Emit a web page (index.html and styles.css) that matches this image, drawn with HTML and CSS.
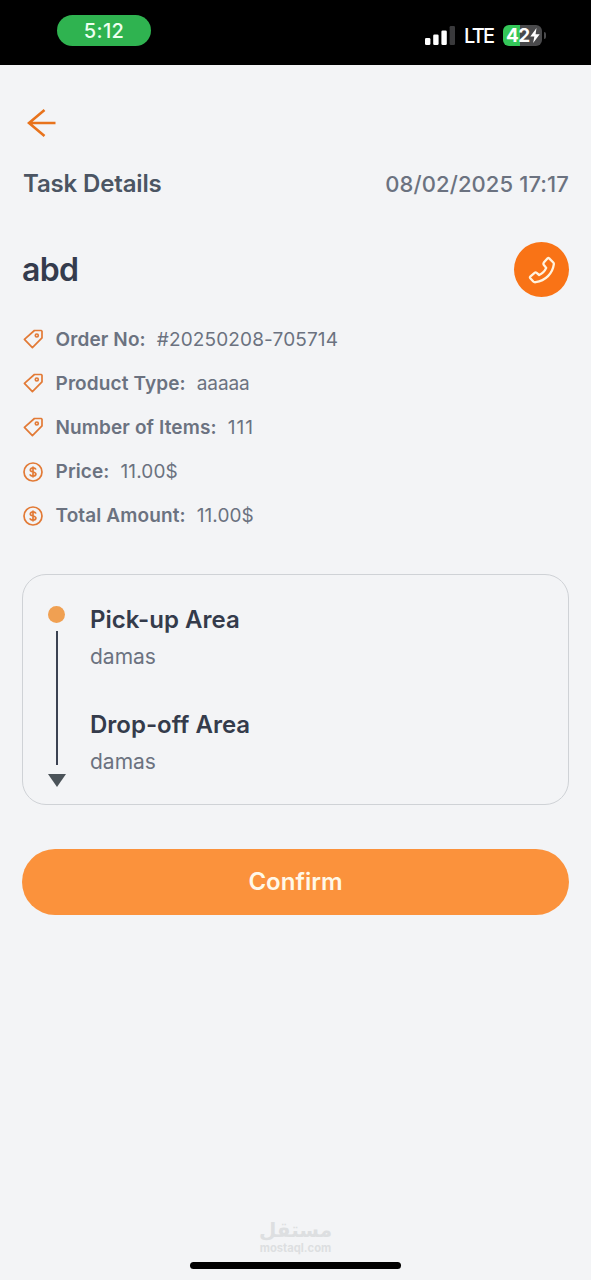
FILE: index.html
```html
<!DOCTYPE html>
<html lang="en">
<head>
<meta charset="utf-8">
<title>Task Details</title>
<link rel="stylesheet" href="styles.css">
</head>
<body>
<svg class="defs" aria-hidden="true">
  <symbol id="tag" viewBox="0 0 20 20"><path d="M1.4 10.3 11.4 1.5H18.3L19 2.3V8.9L9.4 18.6Z"/><circle cx="13.8" cy="6.5" r="1.5"/></symbol>
  <symbol id="coin" viewBox="0 0 20 20"><circle cx="10" cy="10" r="9"/><path d="M12.8 7.7C12.6 6.5 11.5 5.9 10 5.9S7.3 6.6 7.3 7.9C7.3 10.6 12.9 9.3 12.9 12.1 12.9 13.4 11.7 14.1 10 14.1S7.2 13.4 7.1 12.2M10 4.5V15.5"/></symbol>
</svg>
<header class="status">
  <div class="clock">5:12</div>
  <div class="indicators">
    <svg class="signal" viewBox="0 0 30 19"><rect x="0" y="12" width="5.4" height="7" rx="1.3"/><rect x="8.2" y="8.5" width="5.4" height="10.5" rx="1.3"/><rect x="16.4" y="4.5" width="5.4" height="14.5" rx="1.3"/><rect class="dim" x="24.6" y="0" width="5.4" height="19" rx="1.3"/></svg>
    <span class="network">LTE</span>
    <div class="battery"><span>42</span><svg class="bolt" viewBox="0 0 10 16"><path d="M6.6 0 0 9H4.3L3 16 10 6.7H5.6Z"/></svg></div>
    <i class="battery-cap"></i>
  </div>
</header>
<main class="page">
  <svg class="back" viewBox="0 0 30 30"><path d="M28.5 15H2M17.5 2 2 15 17.5 28"/></svg>
  <div class="heading"><h1>Task Details</h1><time>08/02/2025 17:17</time></div>
  <div class="customer">
    <h2>abd</h2>
    <a class="call"><svg viewBox="0 0 28 28"><path d="M19.6 2.3Q20.4 1.7 21.2 2.4L25.3 6.5Q26 7.2 25.8 8.4C24.6 17.5 17.6 24.6 7.6 26.2Q6.2 26.4 5.3 25.5L2.3 22.2Q1.5 21.2 2.5 20.3L6.6 16.8Q7.6 16 8.6 16.8L11.2 19C14.4 17.5 16.9 15 18.2 11.9L15.9 9Q15 7.8 15.8 6.6Z"/></svg></a>
  </div>
  <ul class="facts">
    <li><svg><use href="#tag"/></svg><b>Order No:</b><span class="number">#20250208-705714</span></li>
    <li><svg><use href="#tag"/></svg><b>Product Type:</b><span class="word">aaaaa</span></li>
    <li><svg><use href="#tag"/></svg><b>Number of Items:</b><span class="count">111</span></li>
    <li><svg><use href="#coin"/></svg><b>Price:</b><span>11.00$</span></li>
    <li><svg><use href="#coin"/></svg><b>Total Amount:</b><span>11.00$</span></li>
  </ul>
  <section class="route">
    <div class="track"><i class="dot"></i><i class="line"></i><svg class="arrow" viewBox="0 0 18 13"><path d="M0 0H18L9 13Z"/></svg></div>
    <div class="stops">
      <div class="stop"><h3>Pick-up Area</h3><p>damas</p></div>
      <div class="stop"><h3>Drop-off Area</h3><p>damas</p></div>
    </div>
  </section>
  <button class="confirm">Confirm</button>
</main>
<footer class="footer">
  <div class="brand" lang="ar">مستقل</div>
  <div class="domain">mostaql.com</div>
  <div class="home-bar"></div>
</footer>
</body>
</html>
```
FILE: styles.css
```css
* { box-sizing: border-box; }
body { margin: 0; height: 1280px; display: flex; flex-direction: column; background: #f3f4f6; color: #6b7280; font-family: Inter, "Liberation Sans", sans-serif; overflow: hidden; }
h1, h2, h3, p, ul { margin: 0; padding: 0; }
.defs { display: none; }
.status { height: 65px; flex: none; background: #000; color: #fff; display: flex; justify-content: space-between; align-items: flex-start; padding: 15px 45px 0 57px; }
.clock { width: 94px; height: 31px; border-radius: 16px; background: #2fb350; color: #eefff0; text-align: center; font-size: 20px; line-height: 32px; font-weight: 500; letter-spacing: 0.3px; }
.indicators { display: flex; align-items: center; margin-top: 8px; height: 24px; }
.signal { width: 30px; height: 19px; fill: #fff; }
.signal .dim { fill: #3a3a3c; }
.network { margin: 2px 0 0 9px; width: 30px; font-size: 20px; font-weight: 500; letter-spacing: -1.7px; }
.battery { margin-left: 9px; width: 39px; height: 21px; border-radius: 6px; background: linear-gradient(90deg, #34c759 43%, #4a4a4c 43%); display: flex; align-items: center; padding-left: 3px; font-size: 19px; font-weight: 700; letter-spacing: -0.5px; }
.bolt { width: 10px; height: 15px; fill: #fff; }
.battery-cap { width: 2px; height: 7px; margin-left: 2px; border-radius: 0 2px 2px 0; background: #4a4a4c; }
.page { flex: 1; padding: 43px 22px 0; }
.back { display: block; width: 30px; height: 30px; margin-left: 5px; fill: none; stroke: #e8731c; stroke-width: 2.6; }
.heading { display: flex; justify-content: space-between; align-items: center; height: 30px; margin-top: 30px; padding-left: 1px; }
h1 { font-size: 24px; font-weight: 600; color: #4b5563; letter-spacing: -0.15px; }
time { font-size: 22px; font-weight: 500; margin-top: 1px; letter-spacing: 0.1px; }
.customer { display: flex; justify-content: space-between; align-items: center; height: 55px; margin-top: 44px; }
h2 { font-size: 32px; font-weight: 600; color: #343b4d; letter-spacing: -0.7px; }
.call { width: 55px; height: 55px; border-radius: 50%; background: #f97316; display: flex; align-items: center; justify-content: center; }
.call svg { width: 28px; height: 28px; fill: none; stroke: #fff3df; stroke-width: 2.3; stroke-linejoin: round; }
.facts { list-style: none; margin-top: 20px; }
.facts li { height: 44.2px; display: flex; align-items: center; font-size: 19px; white-space: nowrap; }
.facts svg { width: 20px; height: 20px; margin: 0 12.5px 0 1px; fill: none; stroke: #e27a36; stroke-width: 1.7; stroke-linejoin: round; }
.facts b { font-weight: 600; margin-right: 11px; letter-spacing: 0.12px; }
.facts span { letter-spacing: 0.1px; }
.facts .number { letter-spacing: 0.14px; }
.facts .word { letter-spacing: -0.1px; }
.facts .count { letter-spacing: 1.1px; }
.route { height: 231px; margin-top: 36px; border: 1px solid #cfd2d6; border-radius: 24px; display: flex; padding: 29px 24px 0 24.5px; }
.track { width: 18px; display: flex; flex-direction: column; align-items: center; padding-top: 2px; }
.dot { width: 17px; height: 17px; border-radius: 50%; background: #f0a052; }
.line { width: 2px; height: 134px; margin: 8px 0 9px; background: #3b4252; }
.arrow { width: 18px; height: 13px; fill: #4b5359; }
.stops { margin-left: 24.5px; }
.stop { height: 105px; }
h3 { font-size: 24px; line-height: 32px; font-weight: 600; color: #343b4b; }
.stop p { font-size: 21px; line-height: 28px; margin-top: 7px; }
.confirm { display: block; width: 100%; height: 66px; margin-top: 44px; border: 0; border-radius: 33px; background: #fb923c; color: #fff8e8; font: 600 24px Inter, sans-serif; }
.footer { flex: none; height: 62px; display: flex; flex-direction: column; align-items: center; color: #dddfe1; }
.brand { font: bold 20px/24px "DejaVu Sans", sans-serif; }
.domain { font-size: 11.2px; line-height: 12px; font-weight: 700; }
.home-bar { width: 211px; height: 7px; margin-top: 8px; border-radius: 4px; background: #000; }
```
